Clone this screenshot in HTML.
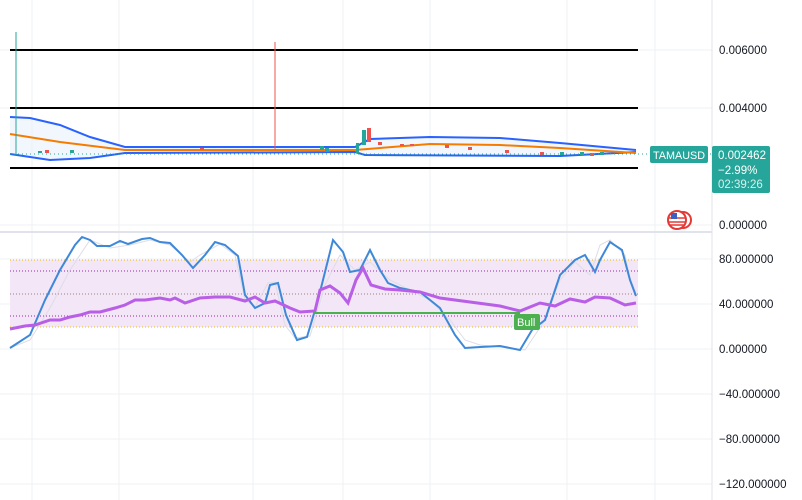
<!DOCTYPE html><html><head><style>
body{margin:0;width:802px;height:500px;background:#fff;overflow:hidden;font-family:"Liberation Sans",sans-serif}
svg{position:absolute;left:0;top:0}
.ax{font-size:11.5px;fill:#131722}
</style></head><body>
<svg width="802" height="500">
<g stroke="#eef0f3" stroke-width="1">
<line x1="32" y1="0" x2="32" y2="500"/><line x1="119" y1="0" x2="119" y2="500"/><line x1="253" y1="0" x2="253" y2="500"/><line x1="343" y1="0" x2="343" y2="500"/><line x1="430" y1="0" x2="430" y2="500"/><line x1="567" y1="0" x2="567" y2="500"/><line x1="655" y1="0" x2="655" y2="500"/>
<line x1="0" y1="50" x2="712" y2="50"/><line x1="0" y1="108" x2="712" y2="108"/><line x1="0" y1="225" x2="712" y2="225"/>
<line x1="0" y1="259" x2="712" y2="259"/><line x1="0" y1="304" x2="712" y2="304"/><line x1="0" y1="349" x2="712" y2="349"/><line x1="0" y1="394" x2="712" y2="394"/><line x1="0" y1="439" x2="712" y2="439"/><line x1="0" y1="484" x2="712" y2="484"/>
</g>
<line x1="0" y1="232" x2="712" y2="232" stroke="#e0e3eb" stroke-width="2"/>
<line x1="712" y1="0" x2="712" y2="500" stroke="#e0e3eb"/>
<line x1="10" y1="50" x2="638" y2="50" stroke="#000" stroke-width="2"/>
<line x1="10" y1="108" x2="638" y2="108" stroke="#000" stroke-width="2"/>
<line x1="10" y1="168" x2="638" y2="168" stroke="#000" stroke-width="2"/>
<path d="M10,117 L30,118 L60,125 L90,137 L125,147 L355,147 L370,139 L430,137 L500,138 L560,143 L636,150 L636,152 L560,156 L365,155 L355,152 L125,153 L90,158 L50,160 L10,154Z" fill="#e8f1fb" opacity=".6"/>
<path d="M10,117 L30,118 L60,125 L90,137 L125,147 L355,147 L370,139 L430,137 L500,138 L560,143 L636,150" fill="none" stroke="#2962ff" stroke-width="2"/>
<path d="M10,154 L50,160 L90,158 L125,153 L355,152 L365,155 L560,156 L636,152" fill="none" stroke="#2962ff" stroke-width="2"/>
<path d="M10,134 L60,142 L125,150 L355,150 L430,144 L500,145 L560,148 L636,153" fill="none" stroke="#f57c00" stroke-width="2"/>
<line x1="16" y1="32" x2="16" y2="155" stroke="#26a69a"/>
<line x1="275" y1="42" x2="275" y2="150" stroke="#ef5350"/>
<g fill="#ef5350"><rect x="367" y="128" width="4" height="14"/><rect x="378" y="142" width="4" height="3"/><rect x="445" y="145" width="4" height="3"/><rect x="540" y="152" width="4" height="3"/><rect x="400" y="144" width="4" height="2"/><rect x="410" y="144" width="4" height="2"/><rect x="468" y="147" width="4" height="3"/><rect x="505" y="150" width="4" height="3"/><rect x="590" y="153" width="4" height="3"/><rect x="45" y="150" width="4" height="3"/><rect x="200" y="148" width="4" height="2"/></g>
<g fill="#26a69a"><rect x="362" y="130" width="4" height="15"/><rect x="356" y="143" width="3" height="10"/><rect x="320" y="146" width="4" height="4"/><rect x="560" y="152" width="4" height="3"/><rect x="38" y="151" width="4" height="2"/><rect x="70" y="150" width="4" height="3"/><rect x="325" y="148" width="4" height="4"/><rect x="580" y="152" width="4" height="3"/><rect x="600" y="152" width="4" height="3"/></g>
<line x1="10" y1="154" x2="712" y2="154" stroke="#26a69a" stroke-dasharray="1 3"/>
<rect x="10" y="260" width="628" height="67" fill="#f2e6f7"/>
<line x1="10" y1="260" x2="638" y2="260" stroke="#f0c000" stroke-dasharray="1 2"/>
<line x1="10" y1="327" x2="638" y2="327" stroke="#f0c000" stroke-dasharray="1 2"/>
<line x1="10" y1="271" x2="638" y2="271" stroke="#9c27b0" stroke-dasharray="1 2"/>
<line x1="10" y1="316" x2="638" y2="316" stroke="#9c27b0" stroke-dasharray="1 2"/>
<line x1="10" y1="294" x2="638" y2="294" stroke="#9c8080" stroke-dasharray="1 2"/>
<path d="M10,348 L30,340 L50,308 L70,270 L90,240 L110,248 L130,245 L150,240 L170,245 L190,262 L200,255 L220,244 L235,255 L245,300 L255,307 L268,283 L275,282 L285,325 L295,338 L310,336 L325,285 L340,255 L355,270 L370,262 L390,280 L410,290 L430,300 L450,320 L465,340 L480,345 L510,348 L525,350 L545,320 L560,280 L575,262 L590,275 L600,245 L610,240 L625,255 L630,280 L636,293" fill="none" stroke="#dddde4" stroke-width="1"/>
<path d="M10,348 L30,335 L45,300 L60,270 L75,245 L82,237 L90,240 L97,246 L110,246 L120,241 L128,244 L142,239 L150,238 L160,242 L170,243 L182,255 L193,268 L205,255 L215,242 L225,245 L238,256 L245,295 L255,308 L265,303 L270,285 L278,283 L286,315 L297,340 L307,337 L318,300 L333,240 L343,252 L350,272 L360,270 L370,250 L380,270 L388,283 L400,288 L420,292 L440,308 L455,335 L465,348 L480,347 L500,346 L520,350 L532,330 L545,320 L560,275 L575,260 L585,255 L595,272 L600,260 L610,242 L622,250 L630,280 L636,296" fill="none" stroke="#3d88d8" stroke-width="2"/>
<path d="M10,329 L25,326 L35,325 L50,320 L60,320 L70,317 L80,315 L90,312 L100,312 L115,308 L125,305 L135,300 L145,300 L160,298 L170,300 L175,298 L185,303 L200,298 L215,297 L230,297 L245,301 L255,297 L265,303 L275,301 L290,308 L300,312 L315,311 L320,290 L330,286 L340,293 L348,303 L356,280 L363,268 L371,285 L385,289 L400,290 L420,292 L440,298 L470,302 L500,306 L520,311 L540,303 L555,306 L570,299 L585,302 L595,297 L610,298 L625,305 L636,303" fill="none" stroke="#b95ee6" stroke-width="3"/>
<line x1="313" y1="313" x2="520" y2="313" stroke="#4caf50" stroke-width="2"/>
<rect x="514" y="314" width="26" height="16" rx="2" fill="#4caf50"/><text x="517" y="326" font-size="11" fill="#fff">Bull</text>
<g class="ax"><text x="719" y="54">0.006000</text><text x="719" y="112">0.004000</text><text x="719" y="229">0.000000</text>
<text x="719" y="263">80.000000</text><text x="719" y="308">40.000000</text><text x="719" y="353">0.000000</text><text x="719" y="398">−40.000000</text><text x="719" y="443">−80.000000</text><text x="719" y="488">−120.000000</text></g>
<rect x="650" y="146" width="58" height="17" rx="2" fill="#26a69a"/><text x="653" y="159" font-size="11" fill="#fff" textLength="52" lengthAdjust="spacingAndGlyphs">TAMAUSD</text>
<rect x="712" y="146" width="58" height="47" rx="2" fill="#26a69a"/>
<text x="718" y="159" font-size="11.5" fill="#fff">0.002462</text><text x="718" y="174" font-size="11.5" fill="#fff">−2.99%</text><text x="718" y="188" font-size="11.5" fill="#d8f0ec">02:39:26</text>
<circle cx="683" cy="220" r="8" fill="#fff" stroke="#e53935" stroke-width="2"/>
<circle cx="677" cy="220" r="9" fill="#fff" stroke="#e53935" stroke-width="2"/>
<line x1="669" y1="218" x2="686" y2="218" stroke="#e53935" stroke-width="1.5"/><line x1="669" y1="222" x2="686" y2="222" stroke="#e53935" stroke-width="1.5"/><line x1="670" y1="225" x2="684" y2="225" stroke="#e53935" stroke-width="1.5"/>
<rect x="671" y="213" width="6" height="6" fill="#3e5fbf"/>
</svg>
</body></html>
